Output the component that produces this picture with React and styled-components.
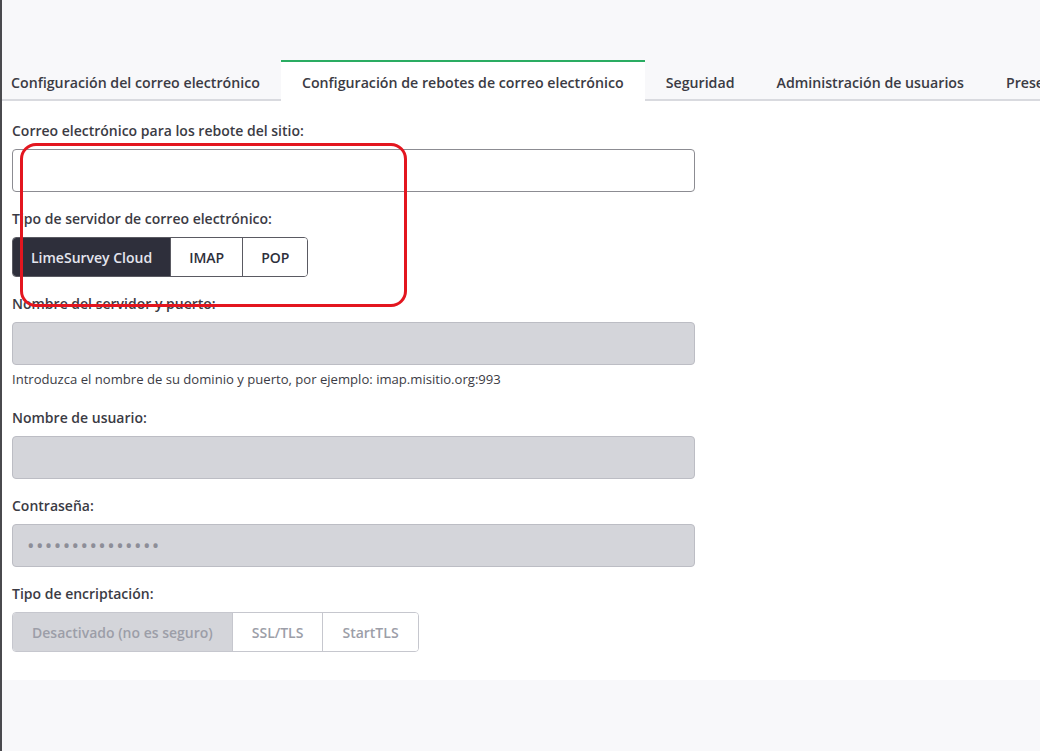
import React from 'react';
import styled, { createGlobalStyle } from 'styled-components';

const GlobalStyle = createGlobalStyle`
	body {
		margin: 0;
		background: #f8f8fa;
		font-family: "Open Sans", "Noto Sans", sans-serif;
		color: #3b3b44;
	}
`;

const tabs = [
	'Configuración del correo electrónico',
	'Configuración de rebotes de correo electrónico',
	'Seguridad',
	'Administración de usuarios',
	'Presentación',
];

const Field = ({ label, children, hint }) => (
	<FieldWrapper>
		<Label>{label}</Label>
		{children}
		{hint && <Hint>{hint}</Hint>}
	</FieldWrapper>
);

export default function App() {
	return (
		<Page>
			<GlobalStyle />
			<Top />
			<TabList>
				{tabs.map((t, i) => (
					<Tab key={t} active={i === 1}>{t}</Tab>
				))}
			</TabList>
			<Panel>
				<Marker />
				<Field label="Correo electrónico para los rebote del sitio:">
					<Input />
				</Field>
				<Field label="Tipo de servidor de correo electrónico:">
					<Group>
						<GroupButton active>LimeSurvey Cloud</GroupButton>
						<GroupButton>IMAP</GroupButton>
						<GroupButton>POP</GroupButton>
					</Group>
				</Field>
				<Field
					label="Nombre del servidor y puerto:"
					hint="Introduzca el nombre de su dominio y puerto, por ejemplo: imap.misitio.org:993"
				>
					<Input disabled />
				</Field>
				<Field label="Nombre de usuario:">
					<Input disabled />
				</Field>
				<Field label="Contraseña:">
					<Input disabled>
						<Dots>•••••••••••••••</Dots>
					</Input>
				</Field>
				<Field label="Tipo de encriptación:">
					<Group muted>
						<GroupButton muted active>Desactivado (no es seguro)</GroupButton>
						<GroupButton muted>SSL/TLS</GroupButton>
						<GroupButton muted>StartTLS</GroupButton>
					</Group>
				</Field>
			</Panel>
		</Page>
	);
}

const Page = styled.div`
	height: 751px;
	overflow: hidden;
	border-left: 2px solid #4a4a4e;
	box-sizing: border-box;
`;

const Top = styled.div`
	height: 60px;
`;

const TabList = styled.div`
	display: flex;
	margin-left: -12px;
	white-space: nowrap;
`;

const Tab = styled.div`
	box-sizing: border-box;
	height: 41px;
	padding: 3px 21px 0;
	display: flex;
	align-items: center;
	font-size: 14.2px;
	font-weight: 600;
	color: #3b3b44;
	background: ${p => (p.active ? '#fff' : '#f8f8fa')};
	border-top: 2px solid ${p => (p.active ? '#2aac62' : 'transparent')};
	border-bottom: 2px solid ${p => (p.active ? '#fff' : '#d9dadf')};
`;

const Panel = styled.div`
	position: relative;
	background: #fff;
	height: 579px;
	box-sizing: border-box;
	padding: 20px 10px 0;
	display: flex;
	flex-direction: column;
	gap: 17px;
`;

const FieldWrapper = styled.div`
	display: flex;
	flex-direction: column;
`;

const Label = styled.div`
	font-size: 14px;
	font-weight: 600;
	color: #3b3b44;
	line-height: 20px;
	margin-bottom: 8px;
`;

const Hint = styled.div`
	font-size: 13.1px;
	color: #3b3b44;
	margin: 6px 0 4px;
	line-height: 16px;
`;

const Input = styled.div`
	box-sizing: border-box;
	width: 683px;
	height: 43px;
	border-radius: 4px;
	border: 1px solid ${p => (p.disabled ? '#bcbdc4' : '#8c8c92')};
	background: ${p => (p.disabled ? '#d4d5da' : '#fff')};
	padding: 0 14px;
	display: flex;
	align-items: center;
`;

const Dots = styled.span`
	color: #8d8e98;
	font-size: 20px;
	letter-spacing: 1.4px;
`;

const Group = styled.div`
	display: flex;
	align-self: flex-start;
	border: 1px solid ${p => (p.muted ? '#c6c7ce' : '#5a5a62')};
	border-radius: 4px;
	overflow: hidden;
`;

const GroupButton = styled.div`
	height: 38px;
	display: flex;
	align-items: center;
	padding: 0 ${p => (p.muted ? '19px' : '18px')};
	font-size: 14px;
	font-weight: 600;
	background: ${p => (p.active ? (p.muted ? '#d4d5da' : '#2e2f3b') : '#fff')};
	color: ${p => (p.muted ? '#9c9ea8' : p.active ? '#e4e5ee' : '#2e2f3b')};
	border-left: 1px solid ${p => (p.muted ? '#c6c7ce' : '#5a5a62')};

	&:first-child {
		border-left: none;
	}
`;

const Marker = styled.div`
	position: absolute;
	left: 18px;
	top: 42px;
	width: 387px;
	height: 164px;
	box-sizing: border-box;
	border: 3px solid #e3161f;
	border-radius: 16px;
	pointer-events: none;
`;
